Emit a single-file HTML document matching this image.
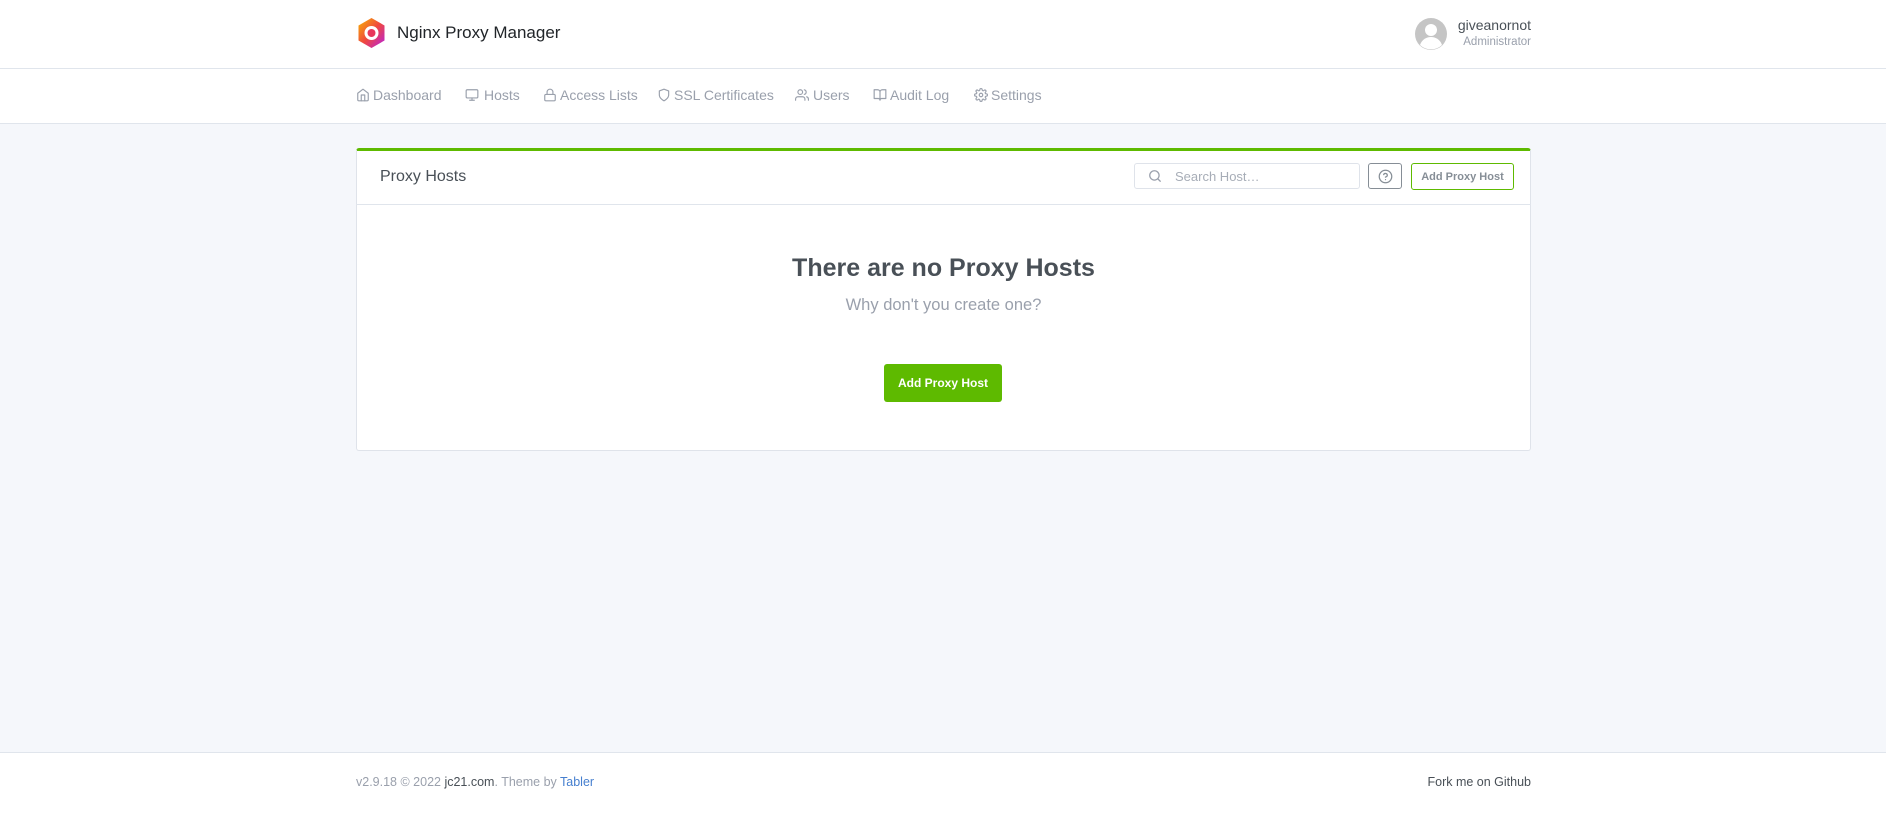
<!DOCTYPE html>
<html><head><meta charset="utf-8"><style>
*{box-sizing:border-box;margin:0;padding:0}
body{width:1886px;height:814px;background:#f5f7fb;font-family:"Liberation Sans",sans-serif;position:relative;overflow:hidden;color:#495057}
.hdr{position:absolute;left:0;top:0;width:1886px;height:69px;background:#fff;border-bottom:1px solid #e0e5ec}
.nav{position:absolute;left:0;top:69px;width:1886px;height:55px;background:#fff;border-bottom:1px solid #e0e5ec}
.abs{position:absolute;white-space:nowrap}
.ni{position:absolute;top:86px;font-size:14px;color:#9aa0ac;line-height:18px}
.ni svg{position:absolute;top:2px;width:14px;height:14px;fill:none;stroke:#9aa0ac;stroke-width:2;stroke-linecap:round;stroke-linejoin:round}
.card{position:absolute;left:356px;top:148px;width:1175px;height:303px;background:#fff;border:1px solid #dfe3ea;border-top:3px solid #5eba00;border-radius:3px}
.foot{position:absolute;left:0;top:752px;width:1886px;height:62px;background:#fff;border-top:1px solid #e0e5ec}
</style></head><body>
<div class="hdr"></div>
<svg class="abs" style="left:357px;top:17px" width="29" height="32" viewBox="0 0 29 32">
<defs><linearGradient id="g" x1="0" y1="0" x2="1" y2="1"><stop offset="0" stop-color="#f7b500"/><stop offset=".5" stop-color="#f0483e"/><stop offset="1" stop-color="#b620e0"/></linearGradient></defs>
<polygon points="14.5,1 27.5,8.5 27.5,23.5 14.5,31 1.5,23.5 1.5,8.5" fill="url(#g)"/>
<circle cx="14.5" cy="16" r="7" fill="#fff"/><circle cx="14.5" cy="16" r="4" fill="#e8375b"/></svg>
<div class="abs" style="left:397px;top:23px;font-size:17px;color:#212529">Nginx Proxy Manager</div>
<svg class="abs" style="left:1415px;top:18px" width="32" height="32" viewBox="0 0 32 32"><circle cx="16" cy="16" r="16" fill="#c5c5c5"/><circle cx="16" cy="12" r="6" fill="#fff"/><path d="M5 27c2-6 7-8 11-8s9 2 11 8a16 16 0 0 1-22 0z" fill="#fff"/></svg>
<div class="abs" style="right:355px;top:17px;font-size:14px;color:#495057">giveanornot</div>
<div class="abs" style="right:355px;top:36px;font-size:11.5px;color:#9aa0ac">Administrator</div>
<div class="nav"></div>
<div class="ni" style="left:356px"><svg style="left:0" viewBox="0 0 24 24"><path d="M3 9l9-7 9 7v11a2 2 0 0 1-2 2H5a2 2 0 0 1-2-2z"/><path d="M9 22V12h6v10"/></svg><span style="margin-left:17px">Dashboard</span></div>
<div class="ni" style="left:465px"><svg style="left:0" viewBox="0 0 24 24"><rect x="2" y="3" width="20" height="14" rx="2"/><path d="M8 21h8M12 17v4"/></svg><span style="margin-left:19px">Hosts</span></div>
<div class="ni" style="left:543px"><svg style="left:0" viewBox="0 0 24 24"><rect x="3" y="11" width="18" height="11" rx="2"/><path d="M7 11V7a5 5 0 0 1 10 0v4"/></svg><span style="margin-left:17px">Access Lists</span></div>
<div class="ni" style="left:657px"><svg style="left:0" viewBox="0 0 24 24"><path d="M12 22s8-4 8-10V5l-8-3-8 3v7c0 6 8 10 8 10z"/></svg><span style="margin-left:17px">SSL Certificates</span></div>
<div class="ni" style="left:795px"><svg style="left:0" viewBox="0 0 24 24"><path d="M17 21v-2a4 4 0 0 0-4-4H5a4 4 0 0 0-4 4v2"/><circle cx="9" cy="7" r="4"/><path d="M23 21v-2a4 4 0 0 0-3-3.9M16 3.1a4 4 0 0 1 0 7.8"/></svg><span style="margin-left:18px">Users</span></div>
<div class="ni" style="left:873px"><svg style="left:0" viewBox="0 0 24 24"><path d="M2 3h6a4 4 0 0 1 4 4v14a3 3 0 0 0-3-3H2zM22 3h-6a4 4 0 0 0-4 4v14a3 3 0 0 1 3-3h7z"/></svg><span style="margin-left:17px">Audit Log</span></div>
<div class="ni" style="left:974px"><svg style="left:0" viewBox="0 0 24 24"><circle cx="12" cy="12" r="3"/><path d="M19.4 15a1.7 1.7 0 0 0 .3 1.8l.1.1a2 2 0 1 1-2.8 2.8l-.1-.1a1.7 1.7 0 0 0-2.9 1.2V21a2 2 0 1 1-4 0v-.1a1.7 1.7 0 0 0-2.9-1.2l-.1.1a2 2 0 1 1-2.8-2.8l.1-.1A1.7 1.7 0 0 0 3 14H3a2 2 0 1 1 0-4h.1a1.7 1.7 0 0 0 1.2-2.9l-.1-.1a2 2 0 1 1 2.8-2.8l.1.1A1.7 1.7 0 0 0 10 3V3a2 2 0 1 1 4 0v.1a1.7 1.7 0 0 0 2.9 1.2l.1-.1a2 2 0 1 1 2.8 2.8l-.1.1A1.7 1.7 0 0 0 21 10h.1a2 2 0 1 1 0 4H21a1.7 1.7 0 0 0-1.6 1z"/></svg><span style="margin-left:17px">Settings</span></div>

<div class="card"></div>
<div class="abs" style="left:356px;top:204px;width:1175px;height:1px;background:#e0e5ec"></div>
<div class="abs" style="left:380px;top:168px;font-size:16px;color:#495057">Proxy Hosts</div>
<div class="abs" style="left:1134px;top:163px;width:226px;height:26px;border:1px solid #dfe3ea;border-radius:3px;background:#fff"></div>
<svg class="abs" style="left:1148px;top:169px" width="14" height="14" viewBox="0 0 24 24" fill="none" stroke="#9aa0ac" stroke-width="2.2" stroke-linecap="round"><circle cx="11" cy="11" r="8"/><path d="M21 21l-4.3-4.3"/></svg>
<div class="abs" style="left:1175px;top:169px;font-size:13px;color:#a7adb7">Search Host…</div>
<div class="abs" style="left:1368px;top:163px;width:34px;height:26px;border:1px solid #868e96;border-radius:3px"></div>
<svg class="abs" style="left:1378px;top:169px" width="15" height="15" viewBox="0 0 24 24" fill="none" stroke="#868e96" stroke-width="2" stroke-linecap="round"><circle cx="12" cy="12" r="10"/><path d="M9.1 9a3 3 0 0 1 5.8 1c0 2-3 3-3 3M12 17h.01"/></svg>
<div class="abs" style="left:1411px;top:163px;width:103px;height:27px;border:1px solid #5eba00;border-radius:3px;font-size:11px;font-weight:bold;color:#868e96;text-align:center;line-height:27px">Add Proxy Host</div>
<div class="abs" style="left:356px;width:1175px;top:254px;text-align:center;font-size:25px;font-weight:bold;color:#495057">There are no Proxy Hosts</div>
<div class="abs" style="left:356px;width:1175px;top:296px;text-align:center;font-size:16.5px;color:#9aa0ac">Why don't you create one?</div>
<div class="abs" style="left:884px;top:364px;width:118px;height:38px;background:#5eba00;border-radius:3px;color:#fff;font-size:12px;font-weight:bold;text-align:center;line-height:38px">Add Proxy Host</div>

<div class="foot"></div>
<div class="abs" style="left:356px;top:775px;font-size:12.5px;color:#9aa0ac">v2.9.18 © 2022 <span style="color:#495057">jc21.com</span>. Theme by <span style="color:#467fcf">Tabler</span></div>
<div class="abs" style="right:355px;top:775px;font-size:12.5px;color:#495057">Fork me on Github</div>
</body></html>
